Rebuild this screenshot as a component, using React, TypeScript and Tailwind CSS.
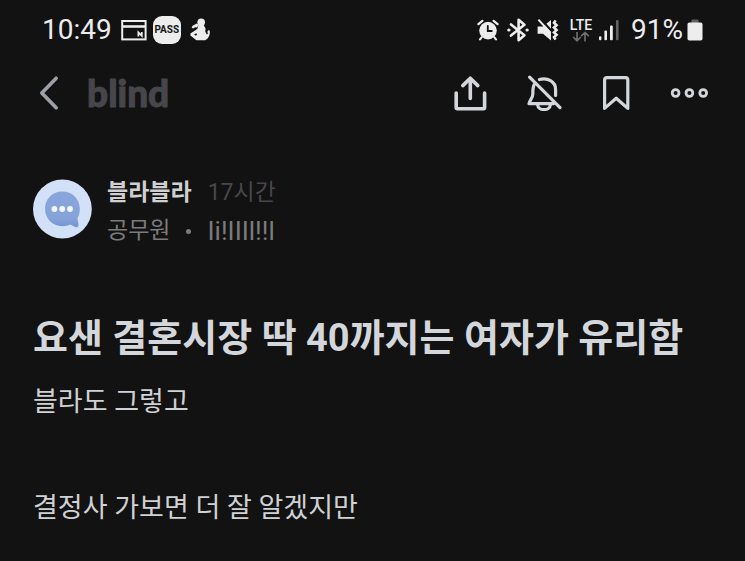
import React from 'react';

interface IconButtonProps {
    label: string;
    children: React.ReactNode;
}

const IconButton: React.FC<IconButtonProps> = ({ label, children }) => (
    <button type="button" aria-label={label} className="flex h-10 w-10 items-center justify-center text-[#d3d6da]">
        {children}
    </button>
);

const StatusBar: React.FC = () => (
    <div className="flex h-15 items-center justify-between px-[42px] text-[#ededed]">
        <div className="flex items-center">
            <span className="text-[28px] leading-8">10:49</span>

            {/* card */}
            <svg className="ml-[9px] h-6 w-[26px]" viewBox="0 0 26 24" fill="none" stroke="currentColor" strokeWidth="2">
                <rect x="1.2" y="3" width="23.4" height="18.4" />
                <path d="M1 8.5h24" strokeWidth="2.6" />
                <path d="M17.4 18.4v-4l3.4 3.4v-3.8" strokeWidth="1.8" />
            </svg>

            <span className="ml-[6px] flex h-7 w-7 items-center justify-center rounded-[9px] bg-[#ededed] text-[10px] leading-none font-bold text-[#161616]">
                PASS
            </span>

            {/* sitting figure */}
            <svg className="ml-[9px] h-6 w-6" viewBox="0 0 24 24" fill="currentColor">
                <circle cx="11.2" cy="4.2" r="3.8" />
                <path d="M8.6 6.6 6.8 5.6 2.6 7.8 1.6 9.4l1.4 1 2.2-1.2 2 .4z" />
                <path d="M8.4 7h5.2l2 3.6-.4 3 1.6 2.8 1-.6-.4-2.4 1.2-1.4 1.2.8c.4 4.6-1.4 7.8-4.6 9.4H6.4L.4 17.4v-2l5.4-3.4 1.8-1.4z" />
                <path d="M4 16.4l2.4-1.2.6 1.2-1 1.4z" fill="#121212" />
            </svg>
        </div>

        <div className="flex items-center">
            {/* alarm */}
            <svg className="h-6 w-6" viewBox="0 0 24 24" fill="none" stroke="currentColor" strokeLinecap="round">
                <circle cx="12" cy="12.6" r="8.8" fill="currentColor" stroke="none" />
                <path d="M2.4 6.2 6.4 2.8M21.6 6.2 17.6 2.8M5.6 19.4 4 21.4M18.4 19.4l1.6 2" strokeWidth="2.2" />
                <path d="M11.8 8v5h4" stroke="#121212" strokeWidth="1.8" />
            </svg>

            {/* bluetooth */}
            <svg className="ml-[6px] h-6 w-6" viewBox="0 0 24 24" fill="none" stroke="currentColor" strokeWidth="2.6" strokeLinejoin="round" strokeLinecap="round">
                <path d="M5 6.4l13.4 10.8-5.8 5V1.8l5.8 5L5 17.6" />
                <path d="M2.8 12h.2M21 12h.2" strokeWidth="3.2" />
            </svg>

            {/* vibrate, sound off */}
            <svg className="ml-[6px] h-6 w-6" viewBox="0 0 24 24" fill="none" stroke="currentColor">
                <path d="M1.6 8.4h5.4l8-6.4v20.4l-8-6.6H1.6z" fill="currentColor" stroke="none" />
                <path d="M4.6 1 17 14.4" stroke="#121212" strokeWidth="2.2" />
                <path d="M2.4 1.6 14.6 15" strokeWidth="2" />
                <path d="M19.6 2.4 18 4.8l2.6 2.4L18 9.6l2.6 2.4-2.6 2.4 2.6 2.4-2.6 2.4 1.6 2.4" strokeWidth="2.6" />
            </svg>

            <span className="ml-[9px] flex w-6 flex-col items-center">
                <span className="text-[14px] leading-3 font-medium">LTE</span>
                <svg className="h-[11px] w-[18px] text-[#6d6d6d]" viewBox="0 0 18 11" fill="none" stroke="currentColor" strokeWidth="1.7">
                    <path d="M5 1v9M1.2 6 5 9.7 8.8 6M13 10.4V1.6M9.2 5.2 13 1.4l3.8 3.8" />
                </svg>
            </span>

            {/* signal */}
            <svg className="ml-[6px] h-6 w-5" viewBox="0 0 20 24" fill="currentColor">
                <rect x="0" y="18.2" width="2.4" height="4" rx="1" />
                <rect x="5.4" y="12.5" width="2.6" height="9.7" rx="1" />
                <rect x="11" y="7.5" width="2.8" height="14.7" rx="1" />
                <rect x="17" y="2" width="2.6" height="20.2" rx="1" fill="#626262" />
            </svg>

            <span className="ml-3 text-[28px] leading-8">91%</span>

            {/* battery */}
            <svg className="ml-1 h-6 w-4" viewBox="0 0 16 24" fill="currentColor">
                <rect x="4.5" y="1.4" width="7" height="5" rx="1" fill="#626262" />
                <rect x="0.5" y="4.6" width="15" height="18" rx="1.8" />
            </svg>
        </div>
    </div>
);

const Header: React.FC = () => (
    <header className="flex h-[66px] items-center justify-between pr-[35px] pl-[29px]">
        <div className="flex items-center">
            <button type="button" aria-label="뒤로" className="flex h-10 w-10 items-center justify-center text-[#9da1a5]">
                <svg className="h-9 w-5" viewBox="0 0 20 36" fill="none" stroke="currentColor" strokeWidth="3.6" strokeLinecap="round" strokeLinejoin="round">
                    <path d="M17.2 3.2 2.8 18l14.4 14.8" />
                </svg>
            </button>
            <span className="ml-[18px] font-['Lato',sans-serif] text-[37px] leading-10 font-black text-[#46464b] [-webkit-text-stroke:1px_#46464b]">
                blind
            </span>
        </div>

        <div className="flex items-center gap-[33px]">
            <IconButton label="공유">
                <svg className="h-9 w-9" viewBox="0 0 36 36" fill="none" stroke="currentColor" strokeWidth="3.6" strokeLinecap="round" strokeLinejoin="round">
                    <path d="M3.2 18v14.6q0 1.2 1.2 1.2h26q1.2 0 1.2-1.2V18M17.3 23.4V3.4M9.8 10.6l7.5-7.4 7.5 7.4" />
                </svg>
            </IconButton>
            <IconButton label="알림 끄기">
                <svg className="h-9 w-9" viewBox="0 0 36 36" fill="none" stroke="currentColor" strokeWidth="3.2" strokeLinecap="round" strokeLinejoin="round">
                    <path d="M3.6 2.2 34 32.6" />
                    <path d="M8.2 9.6C6.8 12 6.8 15 6.8 19.2c0 4-3.4 6.4-3.8 9.4h24.6" />
                    <path d="M13.4 4.6C21.5 2 29.6 6.8 29.6 14.4v6" />
                    <path d="M11.6 29.8c.6 6.4 12.2 6.4 12.8 0" />
                </svg>
            </IconButton>
            <IconButton label="북마크">
                <svg className="h-9 w-9" viewBox="0 0 36 36" fill="none" stroke="currentColor" strokeWidth="3.2" strokeLinejoin="round">
                    <path d="M5.6 33.4V5q0-2.4 2.4-2.4h18.4q2.4 0 2.4 2.4v28.4L17.2 23.2z" />
                </svg>
            </IconButton>
            <IconButton label="더보기">
                <svg className="h-3 w-10" viewBox="0 0 40 12" fill="none" stroke="currentColor" strokeWidth="2.8">
                    <circle cx="5.6" cy="6" r="3.4" />
                    <circle cx="19.4" cy="6" r="3.4" />
                    <circle cx="33.2" cy="6" r="3.4" />
                </svg>
            </IconButton>
        </div>
    </header>
);

const Avatar: React.FC = () => (
    <svg className="h-[60px] w-[60px] shrink-0" viewBox="0 0 60 60" aria-hidden="true">
        <defs>
            <linearGradient id="bubble" x1="0" y1="0" x2="0" y2="1">
                <stop offset="0" stopColor="#89a6db" />
                <stop offset="0.75" stopColor="#86a3da" />
                <stop offset="1" stopColor="#7394d2" />
            </linearGradient>
        </defs>
        <circle cx="29.4" cy="30" r="29.4" fill="#d2e1f8" />
        <path d="M29.4 12.4c10 0 17.4 7.4 17.4 17.2 0 4.2-.8 7-2.4 9.8.6 3 1.4 5.2 1 7.4-.4 1.6-2 1.8-3.4 1.2l-4.6-2.4c-2.6 1.2-5.2 1.6-8 1.6-10 0-17.4-7.4-17.4-17.6 0-9.8 7.4-17.2 17.4-17.2z" fill="url(#bubble)" />
        <g fill="#f3f7fd">
            <circle cx="21.4" cy="30" r="2.9" />
            <circle cx="29.2" cy="30" r="2.9" />
            <circle cx="37" cy="30" r="2.9" />
        </g>
    </svg>
);

const Author: React.FC = () => (
    <div className="mt-[42px] flex items-center gap-[14px]">
        <Avatar />
        <div className="pt-[6px] text-[23px] leading-[38px]">
            <div className="flex gap-4">
                <span className="font-bold text-[#d0d0d0]">블라블라</span>
                <span className="text-[#47474a]">17시간</span>
            </div>
            <div className="flex items-center text-[#7b7b7b]">
                <span>공무원</span>
                <span className="mx-4 h-[5px] w-[5px] rounded-full bg-[#7b7b7b]" />
                <span className="text-[26px]">Ii!IIIl!!l</span>
            </div>
        </div>
    </div>
);

const App: React.FC = () => {
    const paragraphs = ['블라도 그렇고', '결정사 가보면 더 잘 알겠지만'];

    return (
        <div className="min-h-screen bg-[#121212] font-['Roboto','Noto_Sans_CJK_KR',sans-serif]">
            <StatusBar />
            <Header />
            <main className="px-[33px]">
                <Author />
                <h1 className="mt-15 text-[38px] leading-[56px] font-bold text-[#d3d6da]">
                    요샌 결혼시장 딱 40까지는 여자가 유리함
                </h1>
                <div className="mt-4 space-y-[66px] text-[27px] leading-10 text-[#cfd1d4]">
                    {paragraphs.map((text, index) => (
                        <p key={index}>{text}</p>
                    ))}
                </div>
            </main>
        </div>
    );
};

export default App;
